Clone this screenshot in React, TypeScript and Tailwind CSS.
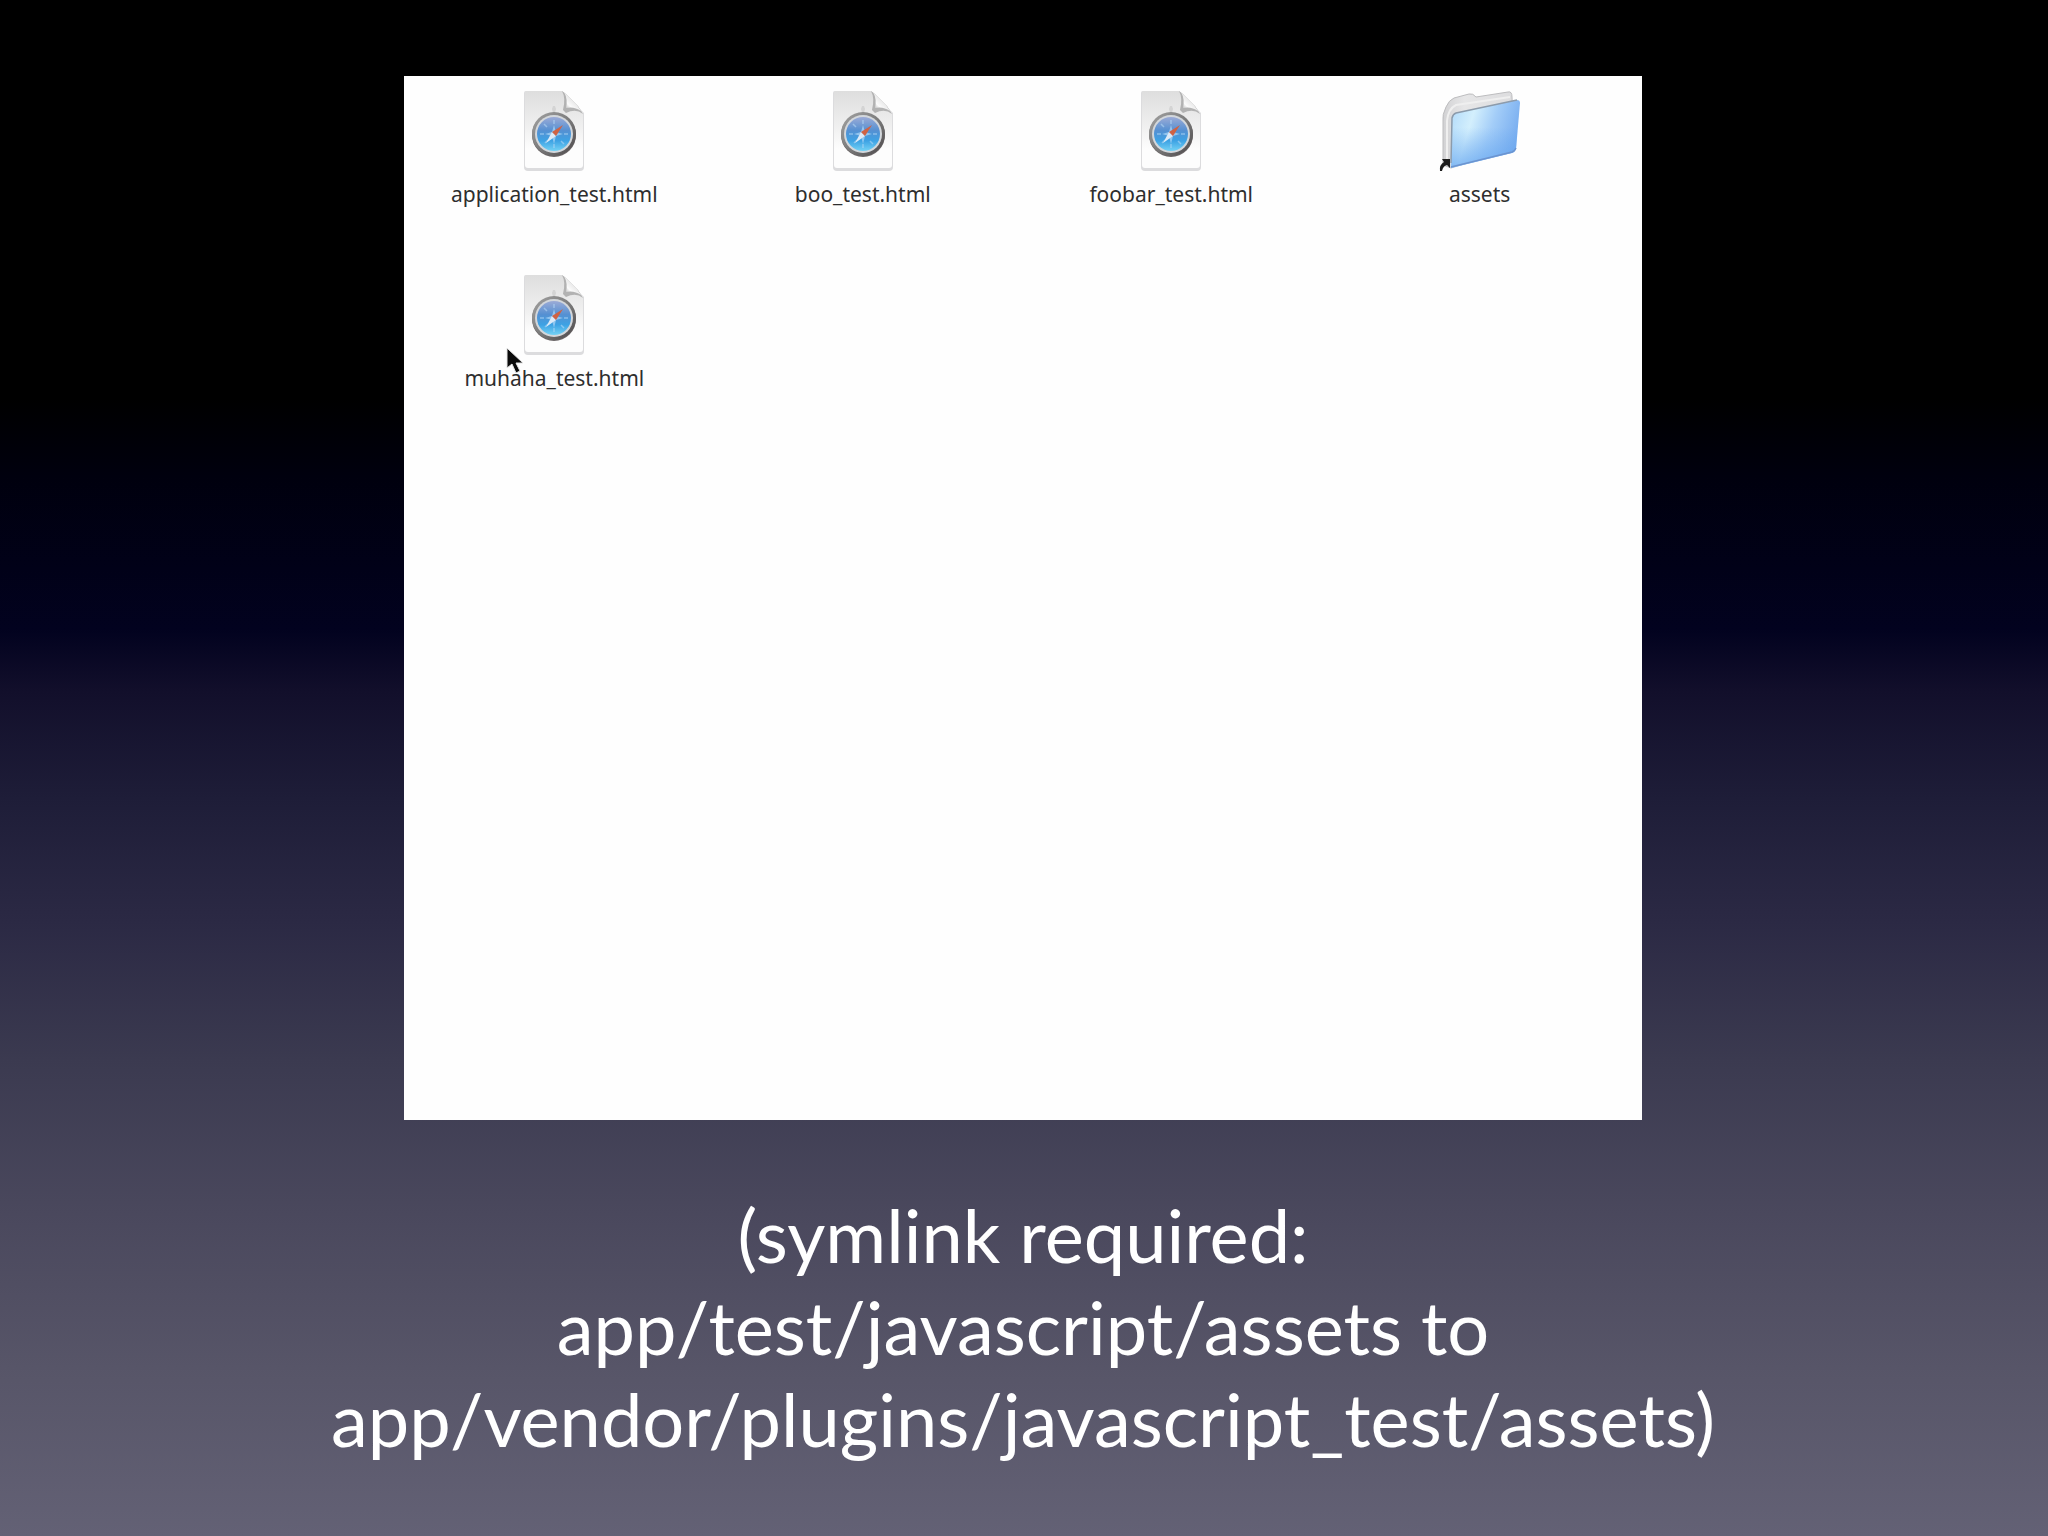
import React from 'react';

type Entry = {
  name: string;
  kind: 'page' | 'folder';
  pointer?: boolean;
};

const entries: Entry[] = [
  { name: 'application_test.html', kind: 'page' },
  { name: 'boo_test.html', kind: 'page' },
  { name: 'foobar_test.html', kind: 'page' },
  { name: 'assets', kind: 'folder' },
  { name: 'muhaha_test.html', kind: 'page', pointer: true },
];

const PageIcon: React.FC = () => (
  <svg viewBox="0 0 84 84" className="size-[84px]" aria-hidden="true">
    <defs>
      <linearGradient id="paper" x1="0" y1="0" x2="0" y2="1">
        <stop offset="0" stopColor="#dedede" />
        <stop offset="0.45" stopColor="#efefef" />
        <stop offset="0.75" stopColor="#fdfdfd" />
      </linearGradient>
      <linearGradient id="fold" x1="0" y1="1" x2="0.7" y2="0.2">
        <stop offset="0" stopColor="#9a9a9a" />
        <stop offset="0.4" stopColor="#fbfbfb" />
        <stop offset="1" stopColor="#d8d8d8" />
      </linearGradient>
      <linearGradient id="rim" x1="0" y1="0" x2="1" y2="1">
        <stop offset="0" stopColor="#a3a3a3" />
        <stop offset="0.5" stopColor="#7c7c7c" />
        <stop offset="1" stopColor="#4a4648" />
      </linearGradient>
      <linearGradient id="dial" x1="0" y1="0" x2="0" y2="1">
        <stop offset="0" stopColor="#9cabd6" />
        <stop offset="0.4" stopColor="#5590d2" />
        <stop offset="0.7" stopColor="#3da2e4" />
        <stop offset="1" stopColor="#74d2f5" />
      </linearGradient>
    </defs>
    <path
      d="M12 4Q12 2 14 2H50L72 24V78Q72 82 68 82H16Q12 82 12 78Z"
      fill="#dcdcde"
    />
    <path d="M13 4Q13 2 15 2H50L71 24V76Q71 79 68 79H16Q13 79 13 76Z" fill="url(#paper)" />
    <path d="M50 2Q54 9 51 21L54 24Q64 19 71 25L66 17L54 5Z" fill="#b2b2b2" />
    <path d="M52 3Q56 10 54 19Q62 17 69 22L65 16Z" fill="url(#fold)" />
    <path d="M40 20l1-3h2l1 3-1 4h-2z" fill="#d4d4d4" />
    <circle cx="42" cy="46" r="22" fill="#6d6869" />
    <circle cx="42" cy="45" r="22" fill="url(#rim)" />
    <circle cx="42" cy="45" r="19" fill="#d3d7db" />
    <circle cx="42" cy="45" r="17" fill="url(#dial)" />
    <path
      d="M42 31v4M42 55v4M28 45h4M52 45h4M32 35l3 3M33 54l3-3M49 52l3 3"
      stroke="#b4d8f6"
      strokeWidth="1.5"
      opacity="0.6"
    />
    <path d="M42 36l2 7 7 2-7 2-2 8-2-8-7-2 7-2z" fill="#a9d4f5" opacity="0.75" />
    <path d="M34 54l6-11 4 4z" fill="#dceaf8" />
    <path d="M51 36L40 43l4 4z" fill="#cf6244" />
  </svg>
);

const FolderIcon: React.FC = () => (
  <svg viewBox="0 0 84 84" className="size-[84px]" aria-hidden="true">
    <defs>
      <linearGradient id="folder-back" x1="0" y1="0" x2="1" y2="0">
        <stop offset="0" stopColor="#d2d2d4" />
        <stop offset="0.3" stopColor="#e6e6e7" />
        <stop offset="1" stopColor="#dcdcde" />
      </linearGradient>
      <linearGradient id="folder-front" x1="0" y1="0.2" x2="1" y2="0.5">
        <stop offset="0" stopColor="#b4dcfa" />
        <stop offset="0.3" stopColor="#d3effd" />
        <stop offset="0.6" stopColor="#a3cdf8" />
        <stop offset="1" stopColor="#75abef" />
      </linearGradient>
      <linearGradient id="folder-shade" x1="0" y1="0" x2="0" y2="1">
        <stop offset="0.4" stopColor="#68a8f0" stopOpacity="0" />
        <stop offset="1" stopColor="#68a8f0" stopOpacity="0.75" />
      </linearGradient>
    </defs>
    <path
      d="M5 76V32Q4 26 8 18Q11 11 16 9L31 5Q35 4 38 8L70 3Q74 2 74 8L76 60L13 79Z"
      fill="url(#folder-back)"
      stroke="#bdbdbf"
      strokeWidth="1"
    />
    <path d="M9 74V32Q10 20 18 16L72 8" fill="none" stroke="#efefef" strokeWidth="2" />
    <path
      d="M14 29Q15 25 18 24L79 11Q82 11 82 14L78 60Q77 63 74 64L13 79Z"
      fill="url(#folder-front)"
    />
    <path
      d="M14 29Q15 25 18 24L79 11Q82 11 82 14L78 60Q77 63 74 64L13 79Z"
      fill="url(#folder-shade)"
    />
    <path d="M13 74L14 29Q15 25 18 24L79 11" fill="none" stroke="#8c9bab" strokeWidth="1.5" />
    <path d="M13 78L74 63Q77 62 78 59" fill="none" stroke="#6c94cf" strokeWidth="1.5" />
    <path d="M2 82Q1 76 6 73L4 70H12V79L9 76Q5 77 4 82Z" fill="#1d1d1d" />
  </svg>
);

const Pointer: React.FC = () => (
  <svg
    viewBox="0 0 18 28"
    className="absolute top-[74px] left-[82px] h-7 w-[18px]"
    aria-hidden="true"
  >
    <path
      d="M1 1V21L6 17L10 26L14 24L10 16H17Z"
      fill="#0a0a0a"
      stroke="#e4e4e4"
      strokeWidth="1"
    />
  </svg>
);

const App: React.FC = () => {
  return (
    <main className="flex min-h-screen flex-col items-center bg-[linear-gradient(to_bottom,#000000_0%,#000000_26%,#00000e_31%,#010118_37%,#02021f_41%,#120f2b_45%,#1e1d38_52%,#2b2944_60%,#3b3a50_69%,#4a485d_79%,#575568_89%,#636175_100%)] pt-19 pr-0.5">
      <section className="aspect-[1237/1043] w-[60.5%] bg-[#fefefe]">
        <ul className="grid grid-cols-4 gap-x-12 gap-y-12 pt-[13px] pr-8 pl-5">
          {entries.map((entry) => (
            <li key={entry.name} className="relative flex h-34 flex-col items-center">
              {entry.kind === 'folder' ? <FolderIcon /> : <PageIcon />}
              <span className="mt-[9px] font-['Noto_Sans','Open_Sans',sans-serif] text-[21px] leading-6 text-[#2e2e2e]">
                {entry.name}
              </span>
              {entry.pointer && <Pointer />}
            </li>
          ))}
        </ul>
      </section>

      <p className="mt-[69px] text-center font-['Gill_Sans','Lato',sans-serif] text-[74px] leading-[92px] whitespace-nowrap text-white">
        (symlink required:
        <br />
        app/test/javascript/assets to
        <br />
        app/vendor/plugins/javascript_test/assets)
      </p>
    </main>
  );
};

export default App;
